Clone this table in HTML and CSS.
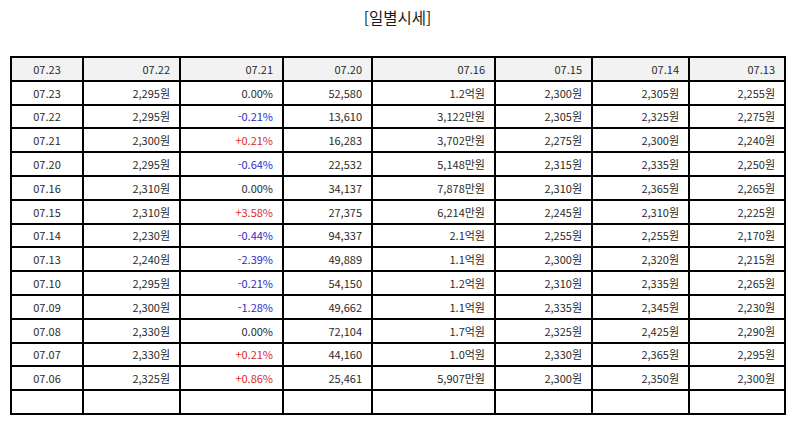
FILE: index.html
```html
<!DOCTYPE html>
<html lang="ko">
<head>
<meta charset="utf-8">
<title>일별시세</title>
<link rel="stylesheet" href="styles.css">
</head>
<body>
<h1 class="title">[일별시세]</h1>
<table class="prices">
<colgroup>
<col class="c1"><col class="c2"><col class="c3"><col class="c4"><col class="c5"><col class="c6"><col class="c7"><col class="c8">
</colgroup>
<thead>
<tr><th class="center">07.23</th><th>07.22</th><th>07.21</th><th>07.20</th><th>07.16</th><th>07.15</th><th>07.14</th><th>07.13</th></tr>
</thead>
<tbody>
<tr><td class="center">07.23</td><td>2,295원</td><td>0.00%</td><td>52,580</td><td>1.2억원</td><td>2,300원</td><td>2,305원</td><td>2,255원</td></tr>
<tr><td class="center">07.22</td><td>2,295원</td><td class="down">-0.21%</td><td>13,610</td><td>3,122만원</td><td>2,305원</td><td>2,325원</td><td>2,275원</td></tr>
<tr><td class="center">07.21</td><td>2,300원</td><td class="up">+0.21%</td><td>16,283</td><td>3,702만원</td><td>2,275원</td><td>2,300원</td><td>2,240원</td></tr>
<tr><td class="center">07.20</td><td>2,295원</td><td class="down">-0.64%</td><td>22,532</td><td>5,148만원</td><td>2,315원</td><td>2,335원</td><td>2,250원</td></tr>
<tr><td class="center">07.16</td><td>2,310원</td><td>0.00%</td><td>34,137</td><td>7,878만원</td><td>2,310원</td><td>2,365원</td><td>2,265원</td></tr>
<tr><td class="center">07.15</td><td>2,310원</td><td class="up">+3.58%</td><td>27,375</td><td>6,214만원</td><td>2,245원</td><td>2,310원</td><td>2,225원</td></tr>
<tr><td class="center">07.14</td><td>2,230원</td><td class="down">-0.44%</td><td>94,337</td><td>2.1억원</td><td>2,255원</td><td>2,255원</td><td>2,170원</td></tr>
<tr><td class="center">07.13</td><td>2,240원</td><td class="down">-2.39%</td><td>49,889</td><td>1.1억원</td><td>2,300원</td><td>2,320원</td><td>2,215원</td></tr>
<tr><td class="center">07.10</td><td>2,295원</td><td class="down">-0.21%</td><td>54,150</td><td>1.2억원</td><td>2,310원</td><td>2,335원</td><td>2,265원</td></tr>
<tr><td class="center">07.09</td><td>2,300원</td><td class="down">-1.28%</td><td>49,662</td><td>1.1억원</td><td>2,335원</td><td>2,345원</td><td>2,230원</td></tr>
<tr><td class="center">07.08</td><td>2,330원</td><td>0.00%</td><td>72,104</td><td>1.7억원</td><td>2,325원</td><td>2,425원</td><td>2,290원</td></tr>
<tr><td class="center">07.07</td><td>2,330원</td><td class="up">+0.21%</td><td>44,160</td><td>1.0억원</td><td>2,330원</td><td>2,365원</td><td>2,295원</td></tr>
<tr><td class="center">07.06</td><td>2,325원</td><td class="up">+0.86%</td><td>25,461</td><td>5,907만원</td><td>2,300원</td><td>2,350원</td><td>2,300원</td></tr>
<tr class="empty"><td></td><td></td><td></td><td></td><td></td><td></td><td></td><td></td></tr>
</tbody>
</table>
</body>
</html>
```
FILE: styles.css
```css
html, body {
  margin: 0;
  padding: 0;
  background: #ffffff;
}

body {
  font-family: "Noto Sans CJK KR", "Noto Sans", sans-serif;
  color: #222222;
  padding: 0 9px 0 10px;
}

.title {
  margin: 0;
  padding: 6px 0 0;
  height: 56px;
  box-sizing: border-box;
  text-align: center;
  font-size: 15.5px;
  font-weight: normal;
  line-height: 22px;
  color: #1a1a1a;
}

.prices {
  width: 774px;
  border-collapse: collapse;
  table-layout: fixed;
  font-size: 11px;
  color: #2a2a2a;
}

.c1 { width: 72px; }
.c2 { width: 97px; }
.c3 { width: 103px; }
.c4 { width: 89px; }
.c5 { width: 123px; }
.c6 { width: 97px; }
.c7 { width: 97px; }
.c8 { width: 96px; }

.prices th,
.prices td {
  border: 2px solid #000000;
  height: 23.8px;
  padding: 0 9px 0 4px;
  text-align: right;
  font-weight: normal;
  line-height: 14px;
  white-space: nowrap;
  box-sizing: border-box;
}

.prices th {
  background: #f2f2f2;
}

.prices .center {
  text-align: center;
  padding: 0 4px;
}

.prices .up {
  color: #e0282e;
}

.prices .down {
  color: #2b2bc8;
}
```
